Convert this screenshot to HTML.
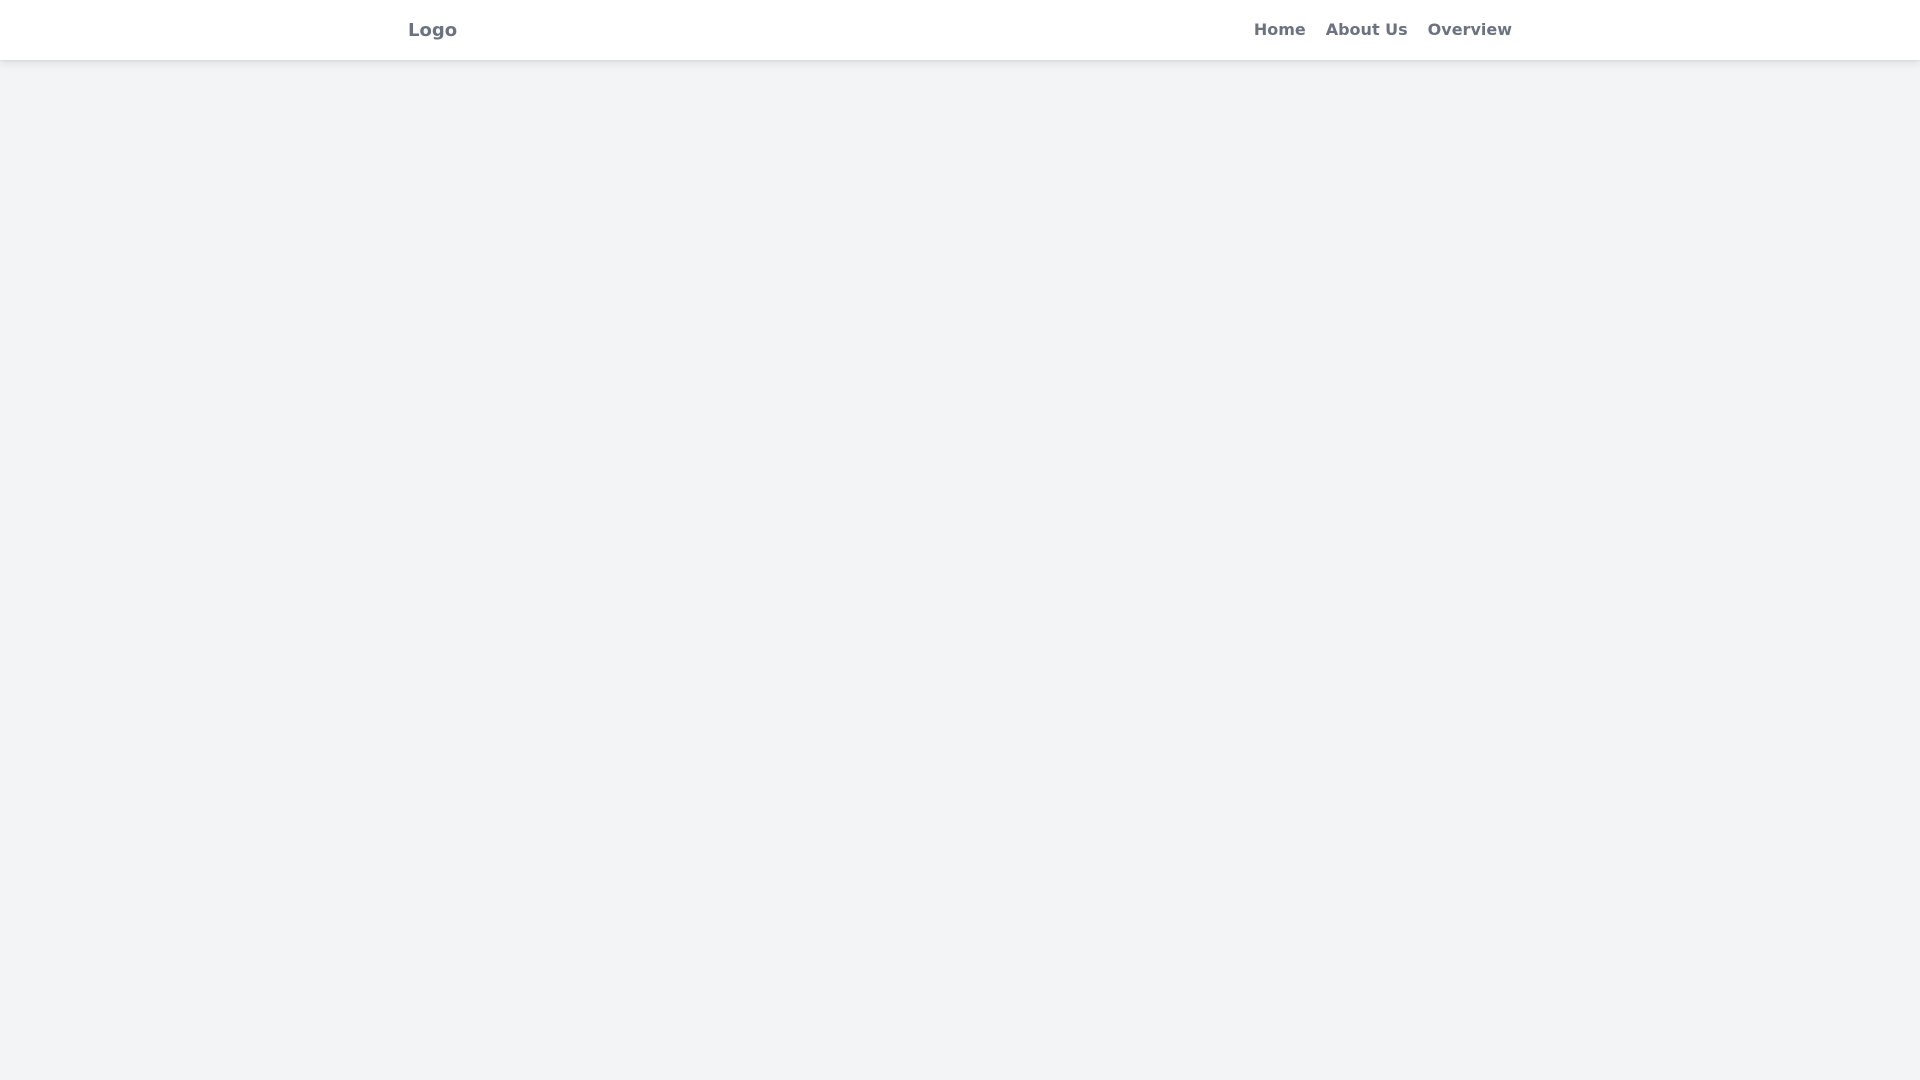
<!DOCTYPE html>
<html><head><meta charset="utf-8"><style>
html,body{margin:0;padding:0;width:1920px;height:1080px;background:#f3f4f6;overflow:hidden}
header{position:absolute;top:0;left:0;width:1920px;height:60px;background:#fff;box-shadow:0 4px 8px rgba(0,0,0,0.08),0 1px 2px rgba(0,0,0,0.06);font-family:"DejaVu Sans","Liberation Sans",sans-serif;font-weight:bold;font-size:16px;color:#6b7280}
.logo{position:absolute;left:408px;top:1px;line-height:60px;font-size:18px}
nav{position:absolute;right:408px;top:0;line-height:60px;display:flex;gap:20px}
</style></head><body>
<header><div class="logo">Logo</div><nav><span>Home</span><span>About Us</span><span>Overview</span></nav></header>
</body></html>
